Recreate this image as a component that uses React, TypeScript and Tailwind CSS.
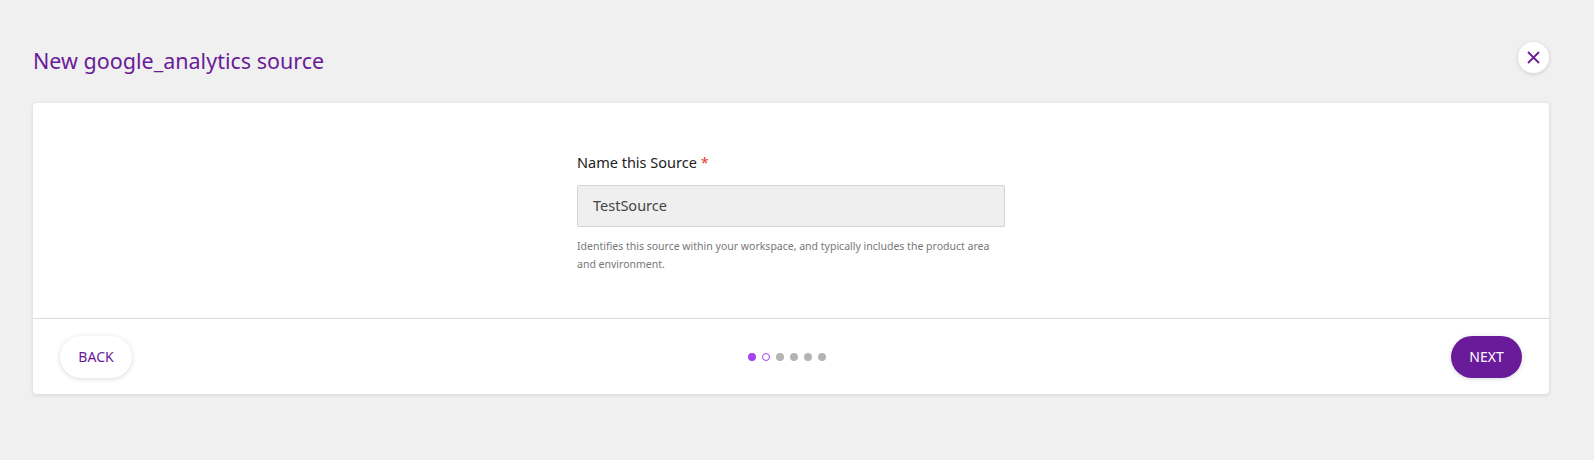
import React from 'react';

const STEPS = 6;
const CURRENT = 1;

export default function App() {
  return (
    <div className="min-h-screen bg-[#f0f0f0] pl-[33px] pr-[45px] pt-[42px] font-['Noto_Sans',sans-serif]">
      {/* Header */}
      <div className="flex items-start justify-between">
        <h1 className="pt-[2px] text-[21.5px] leading-[33px] text-[#6a1b9a]">New google_analytics source</h1>
        <button className="flex h-[31px] w-[31px] items-center justify-center rounded-full bg-white shadow-[0_1px_4px_rgba(0,0,0,0.15)]">
          <svg width="13" height="13" viewBox="0 0 13 13" fill="none">
            <path d="M1 1L12 12M12 1L1 12" stroke="#6a1b9a" strokeWidth="1.8" />
          </svg>
        </button>
      </div>

      {/* Card */}
      <div className="mt-[26px] rounded-[4px] bg-white shadow-[0_1px_4px_rgba(0,0,0,0.12)]">
        <div className="flex justify-center pt-[48px] pb-[45px]">
          <div className="w-[428px]">
            <label className="block text-[14.5px] leading-[22px] text-[#222]">
              Name this Source <span className="text-[#e53935]">*</span>
            </label>
            <div className="mt-[12px] flex h-[42px] items-center rounded-[2px] border border-[#d3d3d3] bg-[#efefef] px-[15px] text-[14.5px] text-[#444]">
              TestSource
            </div>
            <p className="mt-[10px] text-[10.5px] leading-[18px] text-[#777]">
              Identifies this source within your workspace, and typically includes the product area and environment.
            </p>
          </div>
        </div>

        {/* Footer */}
        <div className="flex h-[76px] items-center justify-between border-t border-[#dcdcdc] px-[27px]">
          <button className="h-[42px] w-[72px] rounded-full bg-white text-[14px] text-[#6a1b9a] shadow-[0_1px_5px_rgba(0,0,0,0.15)]">
            BACK
          </button>
          <div className="flex items-center gap-[6px] pr-[10px]">
            {Array.from({ length: STEPS }).map((_, i) => (
              <span
                key={i}
                className={
                  i === 0
                    ? 'h-[8px] w-[8px] rounded-full bg-[#a244f0]'
                    : i === CURRENT
                    ? 'h-[8px] w-[8px] rounded-full border border-[#a244f0] bg-white'
                    : 'h-[8px] w-[8px] rounded-full bg-[#b4b4b4]'
                }
              />
            ))}
          </div>
          <button className="h-[42px] w-[71px] rounded-full bg-[#6a1b9a] text-[14px] text-white shadow-[0_1px_5px_rgba(0,0,0,0.15)]">
            NEXT
          </button>
        </div>
      </div>
    </div>
  );
}
